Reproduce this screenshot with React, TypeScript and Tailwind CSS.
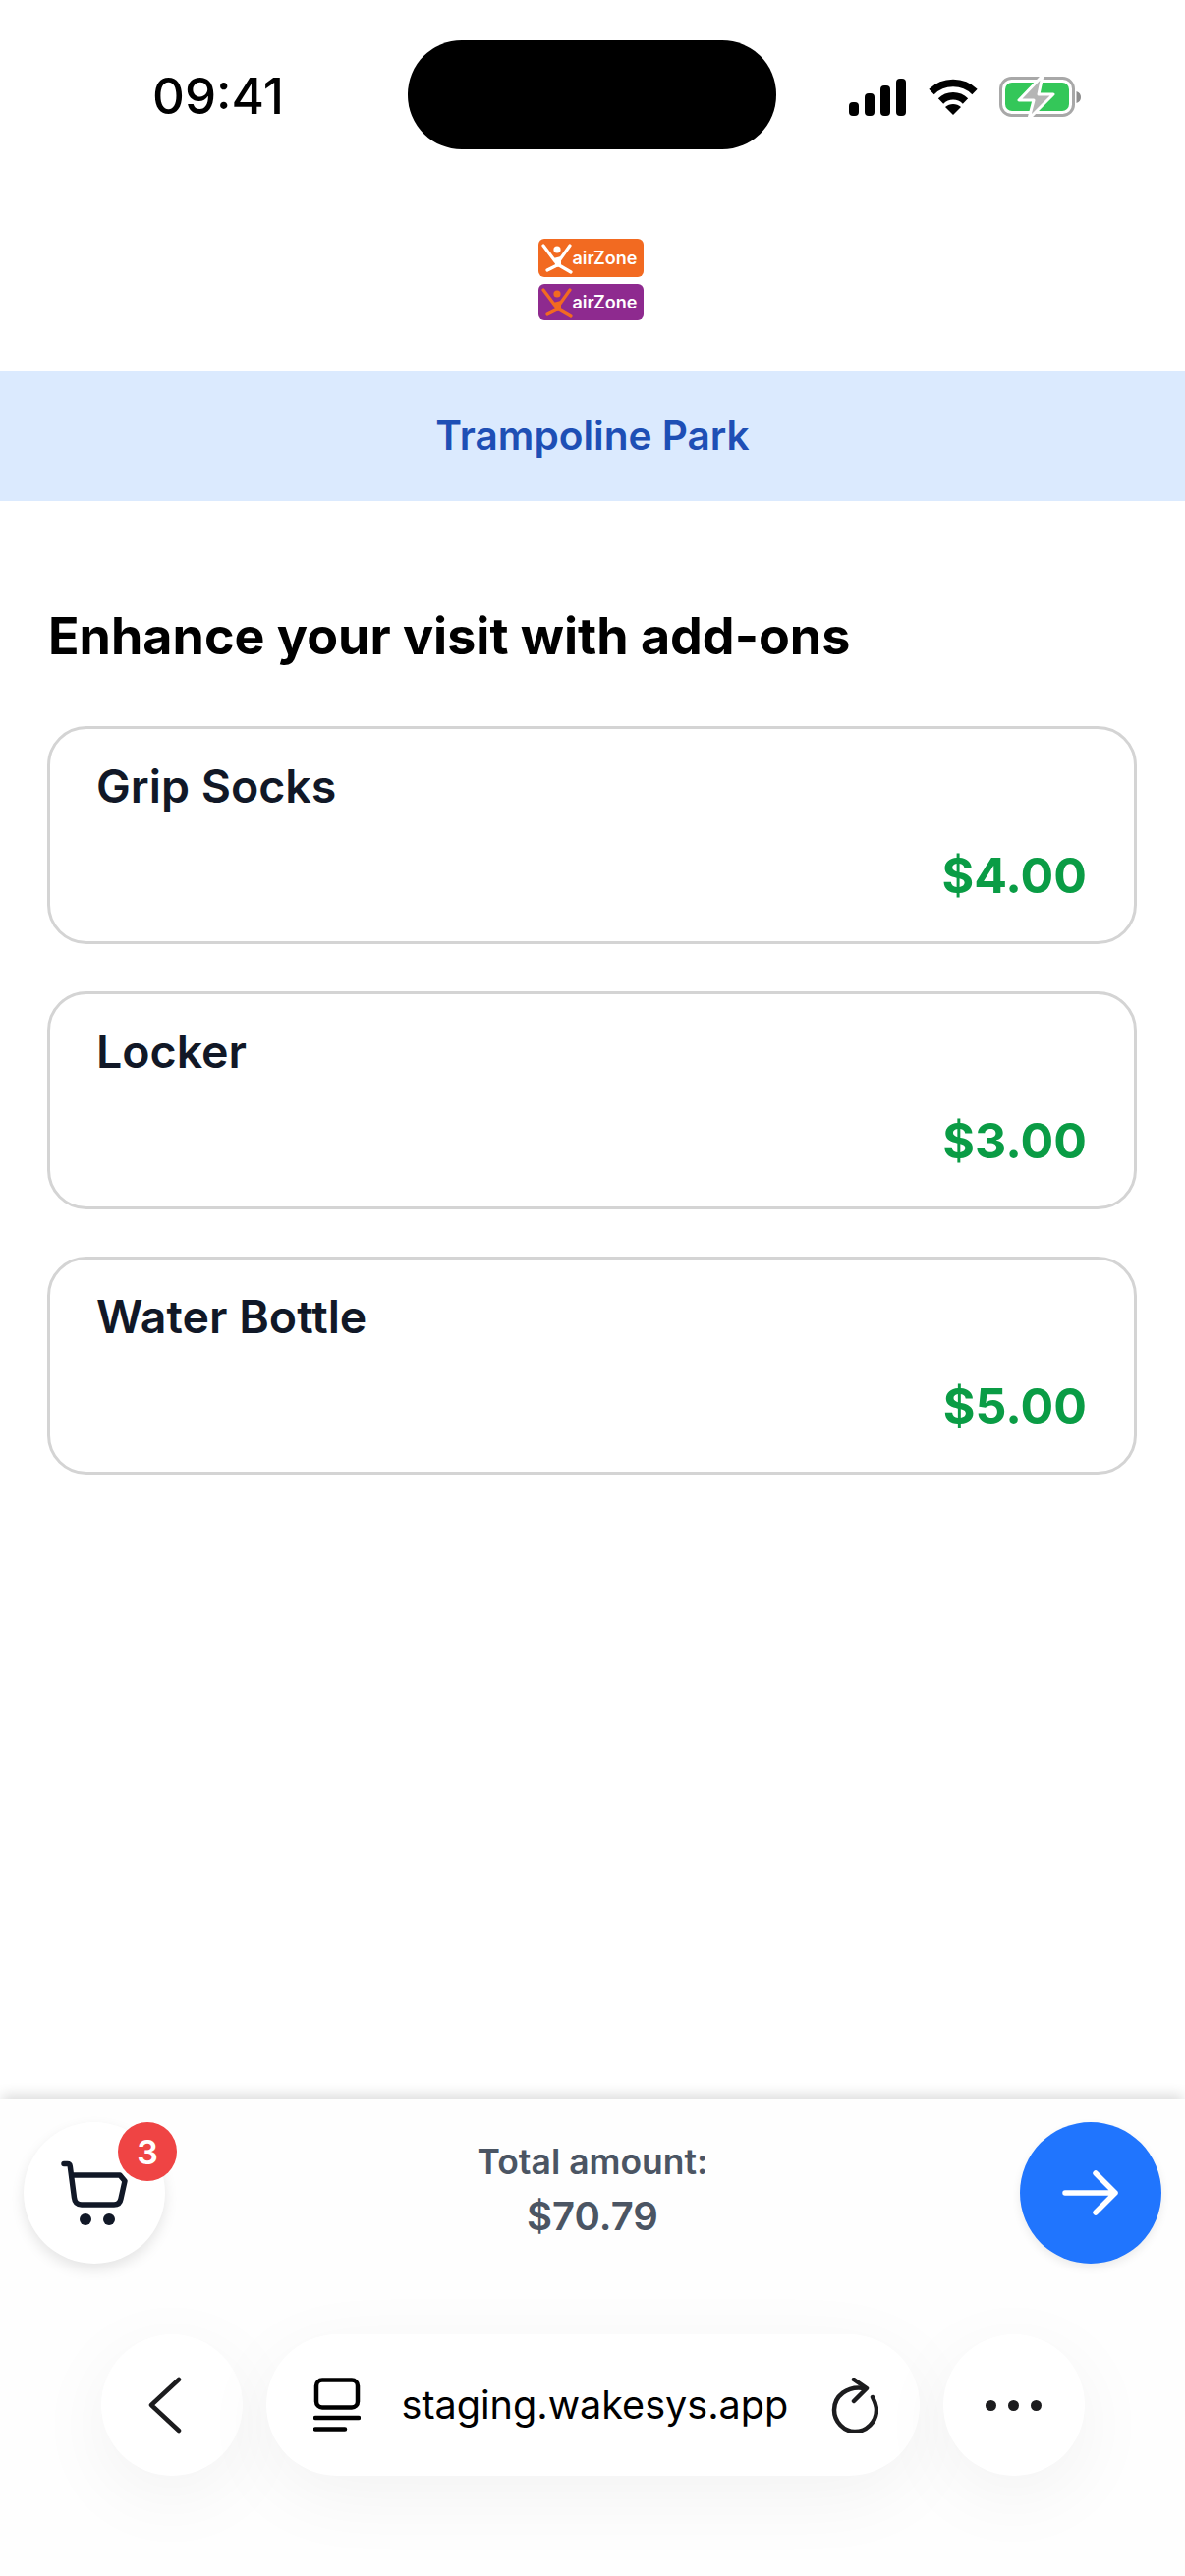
import React from "react";

const addOns = [
  { name: "Grip Socks", price: "$4.00" },
  { name: "Locker", price: "$3.00" },
  { name: "Water Bottle", price: "$5.00" },
];

const StatusIcons = () => (
  <div className="flex items-center">
    {/* signal */}
    <svg width="58" height="38" viewBox="0 0 58 38" fill="#000">
      <rect x="0" y="24" width="10" height="14" rx="4" />
      <rect x="16" y="15" width="10" height="23" rx="4" />
      <rect x="32" y="7" width="10" height="31" rx="4" />
      <rect x="48" y="0" width="10" height="38" rx="4" />
    </svg>
    {/* wifi */}
    <svg className="ml-[23px]" width="50" height="38" viewBox="0 0 50 38" fill="none">
      <path d="M3 13.5C15 1.5 35 1.5 47 13.5" stroke="#000" strokeWidth="7.5" strokeLinecap="butt" />
      <path d="M12.5 23C19.5 16 30.5 16 37.5 23" stroke="#000" strokeWidth="7.5" />
      <path d="M25 37L17 29C21.5 25 28.5 25 33 29Z" fill="#000" />
    </svg>
    {/* battery */}
    <svg className="ml-[22px]" width="84" height="42" viewBox="0 0 84 42" fill="none">
      <rect x="1.5" y="1.5" width="74" height="38" rx="11" stroke="#a8a8a8" strokeWidth="3" />
      <rect x="6" y="6" width="65" height="29" rx="7" fill="#34c759" />
      <path d="M78.5 15C81.5 16 83 18 83 21C83 24 81.5 26 78.5 27Z" fill="#8e8e8e" />
      <path d="M44 -1L20 24H35L30 43L55 18H40Z" fill="#b5b5b5" stroke="#fff" strokeWidth="3" strokeLinejoin="round" />
    </svg>
  </div>
);

const Jumper = ({ color }: { color: string }) => (
  <svg width="35" height="36" viewBox="0 0 35 36" fill="none">
    <circle cx="19" cy="9" r="3.6" fill={color} />
    <path d="M5 5L17 21M32 5L22 19M19 25L9 30M21 25L33 32" stroke={color} strokeWidth="3.2" strokeLinecap="round" strokeLinejoin="round" />
    <path d="M15 18L23 16L23 26L18 27Z" fill={color} />
  </svg>
);

const Logo = ({ bg, figure, h }: { bg: string; figure: string; h: string }) => (
  <div className={`flex w-[107px] items-center rounded-[6px] ${bg} ${h}`}>
    <Jumper color={figure} />
    <span className="text-[18px] leading-none font-semibold text-white">airZone</span>
  </div>
);

const AddOnCard = ({ name, price }: { name: string; price: string }) => (
  <div className="flex h-[222px] flex-col justify-between rounded-[40px] border-[3px] border-[#d4d4d4] bg-white pt-[28px] pr-[48px] pb-[35px] pl-[47px]">
    <p className="text-[46.5px] leading-[60px] font-semibold text-[#111827]">{name}</p>
    <p className="text-right text-[50px] leading-[64px] font-bold text-[#0a9c45]">{price}</p>
  </div>
);

export default function App() {
  return (
    <div className="flex h-[2622px] w-[1206px] flex-col overflow-hidden bg-white font-['Inter',sans-serif]">
      {/* status bar */}
      <div className="flex h-[243px] items-start pt-[41px] pl-[155px]">
        <span className="mt-[29px] w-[260px] text-[51px] leading-[56px] font-medium text-black">09:41</span>
        <div className="h-[111px] w-[375px] rounded-[55px] bg-black" />
        <div className="mt-[37px] ml-[74px]">
          <StatusIcons />
        </div>
      </div>

      {/* logo */}
      <div className="flex h-[135px] flex-col items-center gap-[7px] pr-[4px]">
        <Logo bg="bg-[#f26a21]" figure="#ffffff" h="h-[39px]" />
        <Logo bg="bg-[#8e2a8f]" figure="#f26a21" h="h-[37px]" />
      </div>

      {/* banner */}
      <div className="flex h-[132px] items-center justify-center bg-[#dbeafe]">
        <span className="text-[40.6px] leading-[48px] font-semibold text-[#1e4fb5]">Trampoline Park</span>
      </div>

      {/* add-ons */}
      <div className="flex-1 pt-[106px] pr-[49px] pl-[48px]">
        <h1 className="pl-[1px] text-[52px] leading-[64px] font-bold text-black">Enhance your visit with add-ons</h1>
        <div className="mt-[59px] flex flex-col gap-[48px]">
          {addOns.map((a) => (
            <AddOnCard key={a.name} name={a.name} price={a.price} />
          ))}
        </div>
      </div>

      {/* total bar */}
      <div className="relative flex h-[486px] flex-col bg-[#fefefe] shadow-[0_-6px_12px_-2px_rgba(0,0,0,0.14)]">
        <div className="flex items-start justify-between px-[24px] pt-[24px]">
          <div className="relative flex h-[144px] w-[144px] items-center justify-center rounded-full bg-white shadow-[0_6px_14px_rgba(0,0,0,0.1)]">
            <svg width="96" height="96" viewBox="0 0 96 96" fill="none">
              <path
                d="M17 18.5H20.5Q23 18.5 23.3 21L27.5 53Q28.3 60 35 60H68Q74 60 75 54L79 36L74 30H25"
                stroke="#111827"
                strokeWidth="5.5"
                strokeLinecap="round"
                strokeLinejoin="round"
              />
              <circle cx="39" cy="75" r="6" fill="#111827" />
              <circle cx="63" cy="75" r="6" fill="#111827" />
            </svg>
            <span className="absolute top-0 left-[96px] flex h-[60px] w-[60px] items-center justify-center rounded-full bg-[#ef4444] text-[34px] font-semibold text-white">
              3
            </span>
          </div>
          <div className="flex flex-col items-center pt-[17px] text-[#4b5563]">
            <span className="text-[35.5px] leading-[48px] font-semibold">Total amount:</span>
            <span className="mt-[7px] text-[40px] leading-[48px] font-semibold">$70.79</span>
          </div>
          <div className="flex h-[144px] w-[144px] items-center justify-center rounded-full bg-[#2075fe] shadow-[0_4px_10px_rgba(0,0,0,0.08)]">
            <svg width="60" height="48" viewBox="0 0 60 48" fill="none">
              <path d="M4 24H55M35 4L55 24L35 44" stroke="#fff" strokeWidth="5.5" strokeLinecap="round" strokeLinejoin="round" />
            </svg>
          </div>
        </div>

        {/* browser controls */}
        <div className="mt-[72px] flex justify-center gap-[24px]">
          <div className="flex h-[144px] w-[144px] items-center justify-center rounded-full bg-white pr-[14px] shadow-[0_20px_80px_rgba(0,0,0,0.05)]">
            <svg width="34" height="60" viewBox="0 0 34 60" fill="none">
              <path d="M31 4L3 30L31 56" stroke="#1c1c1e" strokeWidth="4.5" strokeLinecap="round" strokeLinejoin="round" />
            </svg>
          </div>
          <div className="flex h-[144px] w-[665px] items-center rounded-[72px] bg-white pl-[48px] shadow-[0_20px_80px_rgba(0,0,0,0.05)]">
            <svg width="48" height="56" viewBox="0 0 48 56" fill="none">
              <rect x="3" y="2.5" width="42" height="28" rx="6" stroke="#000" strokeWidth="4.5" />
              <path d="M2 41H46M2 52.5H32" stroke="#000" strokeWidth="4.5" strokeLinecap="round" />
            </svg>
            <span className="ml-[42px] text-[39.6px] leading-[48px] text-black">staging.wakesys.app</span>
            <svg className="ml-[44px]" width="48" height="56" viewBox="0 0 48 56" fill="none">
              <path d="M34 11C16 8 3 19 3 33C3 45 13 55 24 55C36 55 46 45 46 33C46 28 44 24 42 20" stroke="#1c1c1e" strokeWidth="4.5" strokeLinecap="round" />
              <path d="M23 2L36 11L23 24" stroke="#1c1c1e" strokeWidth="4.5" strokeLinecap="round" strokeLinejoin="round" />
            </svg>
          </div>
          <div className="flex h-[144px] w-[144px] items-center justify-center gap-[12px] rounded-full bg-white shadow-[0_20px_80px_rgba(0,0,0,0.05)]">
            <span className="h-[11px] w-[11px] rounded-full bg-[#1c1c1e]" />
            <span className="h-[11px] w-[11px] rounded-full bg-[#1c1c1e]" />
            <span className="h-[11px] w-[11px] rounded-full bg-[#1c1c1e]" />
          </div>
        </div>
      </div>
    </div>
  );
}
